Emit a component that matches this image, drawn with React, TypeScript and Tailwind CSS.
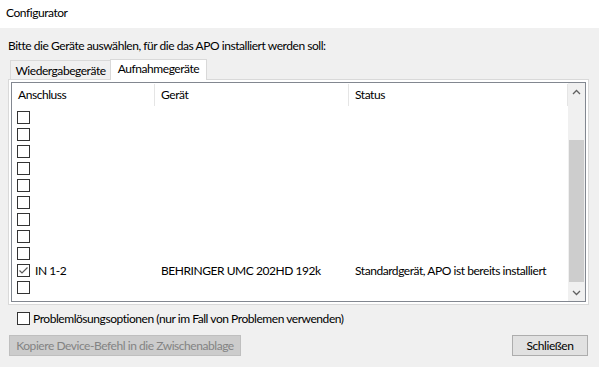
import React from 'react';

const rows = [
    {port: '', device: '', status: '', checked: false},
    {port: '', device: '', status: '', checked: false},
    {port: '', device: '', status: '', checked: false},
    {port: '', device: '', status: '', checked: false},
    {port: '', device: '', status: '', checked: false},
    {port: '', device: '', status: '', checked: false},
    {port: '', device: '', status: '', checked: false},
    {port: '', device: '', status: '', checked: false},
    {port: '', device: '', status: '', checked: false},
    {port: 'IN 1-2', device: 'BEHRINGER UMC 202HD 192k', status: 'Standardgerät, APO ist bereits installiert', checked: true},
    {port: '', device: '', status: '', checked: false},
];

const CheckBox: React.FC<{ checked?: boolean }> = ({checked}) => (
    <div className="w-[13px] h-[13px] border border-[#333333] bg-white shrink-0 flex items-center justify-center">
        {checked && (
            <svg width="11" height="11" viewBox="0 0 11 11">
                <path d="M1.5 5.5 L4 8 L9.5 2.5" fill="none" stroke="#5a5a5a" strokeWidth="1.2"/>
            </svg>
        )}
    </div>
);

const App: React.FC = () => {
    return (
        <div className="w-[599px] h-[367px] bg-[#f0f0f0] flex flex-col text-[12px] tracking-[-0.45px] text-black overflow-hidden whitespace-nowrap"
             style={{fontFamily: 'Lato, sans-serif'}}>
            <div className="h-[28px] bg-white flex items-center pl-[6px] pb-[3px]">
                Configurator
            </div>
            <div className="h-[17px] mt-[9px] pl-[8px] leading-[17px]">
                Bitte die Geräte auswählen, für die das APO installiert werden soll:
            </div>
            {/* tabs */}
            <div className="flex items-end h-[21px] mt-[4px] pl-[10px] relative z-10">
                <div className="h-[19px] w-[101px] border border-b-0 border-[#d9d9d9] bg-[#f0f0f0] flex items-center justify-center pt-[1px]">
                    Wiedergabegeräte
                </div>
                <div className="h-[21px] w-[97px] border border-b-0 border-[#d9d9d9] bg-white flex items-center justify-center -ml-px mb-[-1px] pb-[2px]">
                    Aufnahmegeräte
                </div>
            </div>
            <div className="ml-[8px] w-[581px] h-[226px] border border-[#d9d9d9] bg-white p-[2px]">
                <div className="h-full border border-[#828790] bg-white flex">
                    <div className="flex-1 flex flex-col">
                        <div className="h-[24px] flex">
                            <div className="w-[143px] border-r border-[#e5e5e5] my-[1px] pl-[6px] flex items-center">Anschluss</div>
                            <div className="w-[194px] border-r border-[#e5e5e5] my-[1px] pl-[6px] flex items-center">Gerät</div>
                            <div className="flex-1 border-r border-[#e5e5e5] my-[1px] pl-[6px] flex items-center">Status</div>
                        </div>
                        <div className="flex flex-col pt-[2px]">
                            {rows.map((row, i) => (
                                <div key={i} className="h-[17px] flex items-center">
                                    <div className="w-[143px] pl-[5px] flex items-center gap-[5px]">
                                        <CheckBox checked={row.checked}/>
                                        <span>{row.port}</span>
                                    </div>
                                    <div className="w-[194px] pl-[6px]">{row.device}</div>
                                    <div className="flex-1 pl-[6px]">{row.status}</div>
                                </div>
                            ))}
                        </div>
                    </div>
                    <div className="w-[17px] bg-[#f0f0f0] flex flex-col">
                        <div className="h-[17px] flex items-center justify-center">
                            <svg width="9" height="6" viewBox="0 0 9 6">
                                <path d="M1 5 L4.5 1.5 L8 5" fill="none" stroke="#606060" strokeWidth="1.3"/>
                            </svg>
                        </div>
                        <div className="flex-1 flex flex-col pt-[40px]">
                            <div className="h-[142px] mx-[1px] bg-[#cdcdcd]"/>
                        </div>
                        <div className="h-[17px] flex items-center justify-center">
                            <svg width="9" height="6" viewBox="0 0 9 6">
                                <path d="M1 1 L4.5 4.5 L8 1" fill="none" stroke="#606060" strokeWidth="1.3"/>
                            </svg>
                        </div>
                    </div>
                </div>
            </div>
            <div className="h-[13px] mt-[7px] ml-[17px] flex items-center gap-[3px]">
                <CheckBox/>
                <span>Problemlösungsoptionen (nur im Fall von Problemen verwenden)</span>
            </div>
            <div className="flex justify-between mt-[10px] pl-[9px] pr-[11px]">
                <div className="w-[232px] h-[21px] bg-[#cccccc] border border-[#bfbfbf] text-[#838383] flex items-center justify-center">
                    Kopiere Device-Befehl in die Zwischenablage
                </div>
                <div className="w-[76px] h-[21px] bg-[#e1e1e1] border border-[#adadad] flex items-center justify-center">
                    Schließen
                </div>
            </div>
        </div>
    );
};

export default App;
